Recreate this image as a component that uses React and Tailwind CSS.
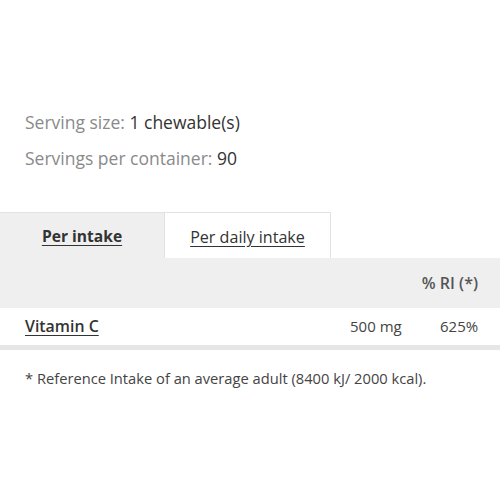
export default function App() {
  const font = { fontFamily: '"Open Sans", "Noto Sans", sans-serif' };
  return (
    <div className="w-[500px] h-[500px] bg-white text-[#333]" style={font}>
      <div className="pt-[110px] px-[25px]">
        <div className="text-[17.5px] leading-[24px]">
          <span className="text-[#8a8a8a]">Serving size:</span> <span className="text-[#333]">1 chewable(s)</span>
        </div>
        <div className="text-[17.5px] leading-[24px] mt-[12px]">
          <span className="text-[#8a8a8a]">Servings per container:</span> <span className="text-[#333]">90</span>
        </div>
      </div>
      <div className="mt-[42px] flex">
        <div className="w-[164px] h-[46px] bg-[#efeff0] border-t border-[#e2e2e2] flex items-center justify-center pt-[3px]">
          <span className="text-[15.6px] font-bold underline underline-offset-[3px] text-[#333]">Per intake</span>
        </div>
        <div className="w-[167px] h-[46px] bg-white border-t border-l border-r border-[#e2e2e2] flex items-center justify-center pt-[3px]">
          <span className="text-[16.1px] underline underline-offset-[3px] text-[#333]">Per daily intake</span>
        </div>
      </div>
      <div className="h-[50px] bg-[#efeff0] flex items-center justify-end pr-[22px]">
        <span className="text-[16px] font-semibold text-[#555]">% RI (*)</span>
      </div>
      <div className="h-[37px] flex items-center pl-[25px] pr-[22px] border-b-[5px] border-[#e6e6e6] box-content">
        <span className="text-[15.9px] font-semibold underline underline-offset-[3px] text-[#333] flex-1">Vitamin C</span>
        <span className="text-[15px] text-[#444] w-[52px]">500 mg</span>
        <span className="text-[15px] text-[#444] ml-[38px] w-[38px] text-right">625%</span>
      </div>
      <div className="px-[25px] mt-[17px] text-[14.7px] text-[#444]">
        * Reference Intake of an average adult (8400 kJ/ 2000 kcal).
      </div>
    </div>
  );
}
